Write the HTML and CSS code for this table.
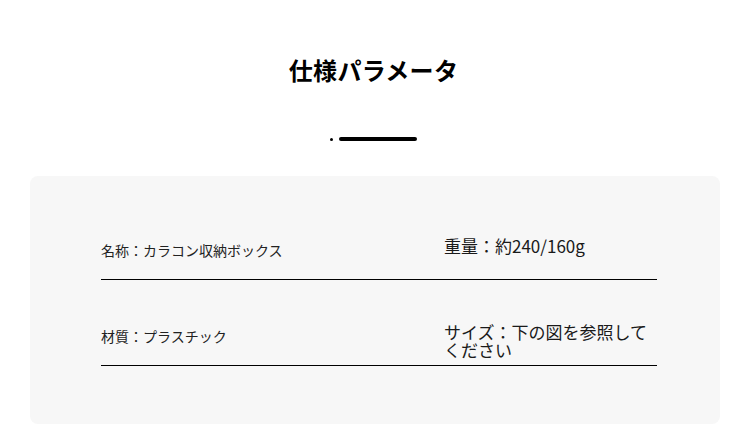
FILE: index.html
```html
<!DOCTYPE html>
<html lang="ja">
<head>
<meta charset="utf-8">
<title>仕様パラメータ</title>
<link rel="stylesheet" href="styles.css">
</head>
<body>
  <header class="head">
    <h1 class="title">仕様パラメータ</h1>
    <div class="deco">
      <span class="deco-dot"></span>
      <span class="deco-line"></span>
    </div>
  </header>
  <section class="panel">
    <div class="row row-first">
      <div class="cell cell-left">名称：カラコン収納ボックス</div>
      <div class="cell cell-right">重量：約240/160g</div>
    </div>
    <div class="row">
      <div class="cell cell-left">材質：プラスチック</div>
      <div class="cell cell-right">サイズ：下の図を参照してください</div>
    </div>
  </section>
</body>
</html>
```

FILE: styles.css
```css
html, body {
  margin: 0;
  padding: 0;
  background: #ffffff;
}

body {
  width: 750px;
  height: 442px;
  overflow: hidden;
  font-family: "Noto Sans CJK JP", "Noto Sans", sans-serif;
  color: #1a1a1a;
}

.head {
  display: flex;
  flex-direction: column;
  align-items: center;
  padding-top: 53px;
  padding-right: 3px;
}

.title {
  margin: 0;
  font-size: 24px;
  line-height: 34px;
  font-weight: 700;
  color: #000;
  letter-spacing: 0.3px;
}

.deco {
  display: flex;
  align-items: center;
  gap: 6px;
  margin-top: 50px;
  height: 4px;
}

.deco-dot {
  width: 3px;
  height: 3px;
  border-radius: 50%;
  background: #000;
}

.deco-line {
  width: 78px;
  height: 4px;
  border-radius: 2px;
  background: #000;
}

.panel {
  margin: 35px 30px 0;
  height: 248px;
  box-sizing: border-box;
  padding: 61px 0 0 71px;
  background: #f7f7f7;
  border-radius: 8px;
}

.row {
  display: flex;
  align-items: flex-start;
  width: 556px;
  height: 42px;
  border-bottom: 1px solid #000;
  margin-top: 43px;
}

.row-first {
  margin-top: 0;
}

.cell-left {
  width: 343px;
  font-size: 14px;
  line-height: 24px;
  padding-top: 1px;
  color: #222;
}

.cell-right {
  width: 213px;
  font-size: 17px;
  line-height: 18px;
  color: #1a1a1a;
}
```
